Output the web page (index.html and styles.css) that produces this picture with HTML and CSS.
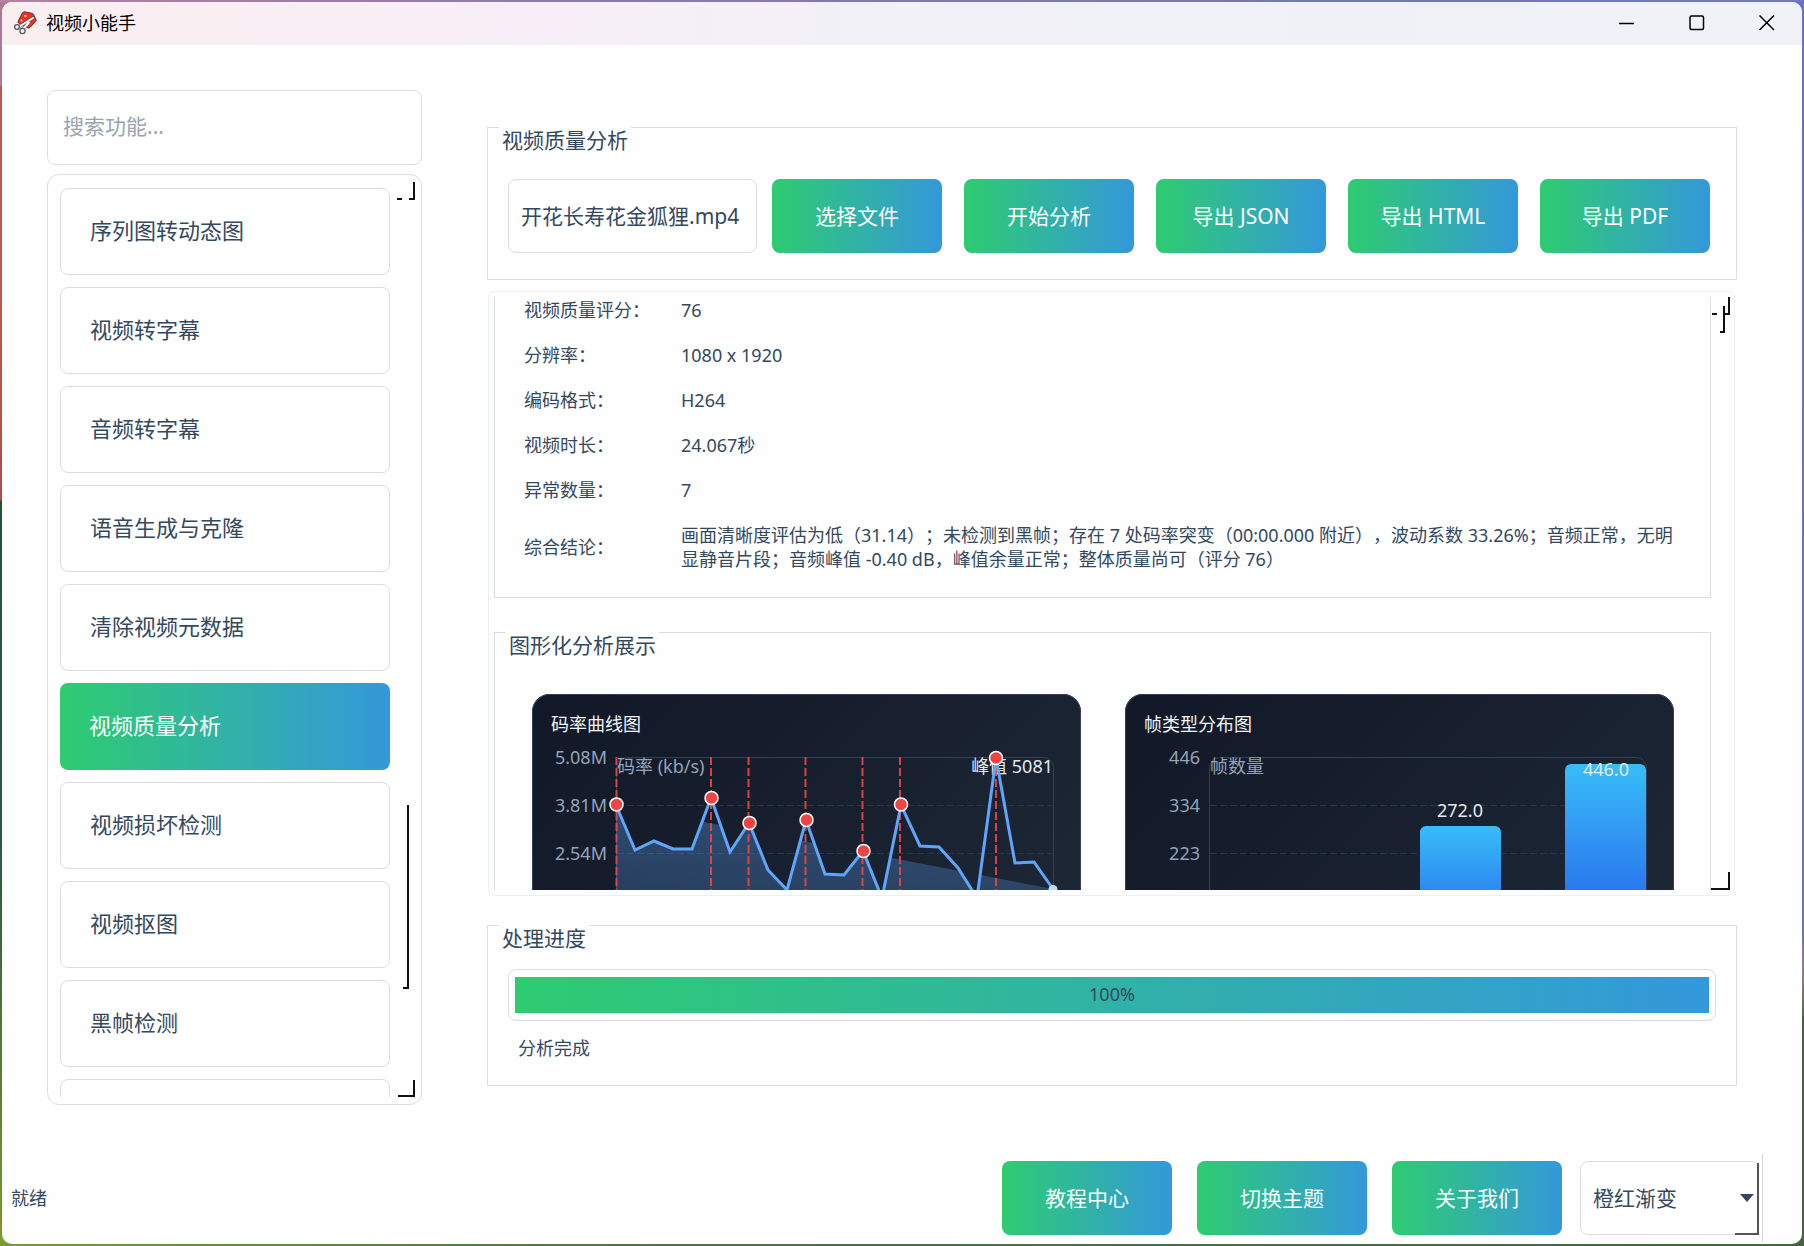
FILE: index.html
```
<!doctype html>
<html lang="zh-CN">
<head>
	<meta charset="UTF-8">
	<title>视频小能手</title>
	<link rel="stylesheet" href="styles.css">
</head>
<body>
	<div class="window">
		<header class="titlebar">
			<svg class="logo" width="24" height="24" viewBox="0 0 24 24">
				<path d="M11.500 .8 19 2.300Q20 2.600 20.500 3.500L23 8.500Q23.500 9.500 22.700 10.400L17 16.500Q16 17.500 14.800 16.800L6 12.500Q4.500 11.500 5.200 10L9.500 1.800Q10.200 .6 11.500 .8Z" fill="#e53429" stroke="#6a302c"/>
				<circle cx="12.500" cy="5" r="1" fill="#fff"/>
				<circle cx="8.500" cy="9.500" r=".9" fill="#fff"/>
				<path d="M20 7 5.500 16M16 11.500 10 18" stroke="#555" stroke-width="3" stroke-linecap="round"/>
				<path d="M20 7 5.500 16M16 11.500 10 18" stroke="#fff" stroke-width="2" stroke-linecap="round"/>
				<circle cx="4" cy="16" r="2.400" fill="#eee" stroke="#555" stroke-width="1.200"/>
				<circle cx="9.500" cy="20" r="2.600" fill="#eee" stroke="#555" stroke-width="1.200"/>
			</svg>
			<h1 class="app-name">视频小能手</h1>
			<button class="win-btn" aria-label="最小化"><svg width="16" height="16" viewBox="0 0 16 16"><path d="M0 8.500H15"/></svg></button>
			<button class="win-btn" aria-label="最大化"><svg width="16" height="16" viewBox="0 0 16 16"><rect x="1" y="1" width="13.500" height="13.500" rx="1.500"/></svg></button>
			<button class="win-btn" aria-label="关闭"><svg width="16" height="16" viewBox="0 0 16 16"><path d="M.5 .5 15 15M15 .5 .5 15"/></svg></button>
		</header>

		<div class="content">
			<aside class="sidebar">
				<input class="search" type="text" placeholder="搜索功能..." aria-label="搜索功能">
				<div class="list">
					<nav class="menu">
						<button class="item">序列图转动态图</button>
						<button class="item">视频转字幕</button>
						<button class="item">音频转字幕</button>
						<button class="item">语音生成与克隆</button>
						<button class="item">清除视频元数据</button>
						<button class="item active">视频质量分析</button>
						<button class="item">视频损坏检测</button>
						<button class="item">视频抠图</button>
						<button class="item">黑帧检测</button>
						<button class="item" aria-label="更多"></button>
					</nav>
					<!-- 滚动条 -->
					<span class="mark side-dash"></span>
					<span class="mark side-up"></span>
					<span class="mark side-thumb"></span>
					<span class="mark side-down"></span>
				</div>
			</aside>

			<main class="main">
				<section class="group">
					<h2 class="legend">视频质量分析</h2>
					<div class="toolbar">
						<input class="file" type="text" value="开花长寿花金狐狸.mp4" aria-label="视频文件">
						<div class="actions">
							<button class="btn">选择文件</button>
							<button class="btn">开始分析</button>
							<button class="btn">导出 JSON</button>
							<button class="btn">导出 HTML</button>
							<button class="btn">导出 PDF</button>
						</div>
					</div>
				</section>

				<div class="scroll">
					<div class="view">
						<section class="group report">
							<dl class="rows">
								<dt>视频质量评分：</dt><dd>76</dd>
								<dt>分辨率：</dt><dd>1080 x 1920</dd>
								<dt>编码格式：</dt><dd>H264</dd>
								<dt>视频时长：</dt><dd>24.067秒</dd>
								<dt>异常数量：</dt><dd>7</dd>
								<dt>综合结论：</dt><dd>画面清晰度评估为低（31.14）；未检测到黑帧；存在 7 处码率突变（00:00.000 附近），波动系数 33.26%；音频正常，无明显静音片段；音频峰值 -0.40 dB，峰值余量正常；整体质量尚可（评分 76）</dd>
							</dl>
						</section>

						<section class="group charts">
							<h2 class="legend">图形化分析展示</h2>
							<div class="cards">
								<div class="card">
									<svg class="chart" viewBox="0 0 549 320">
										<defs>
											<linearGradient id="area" x1="0" y1="64" x2="0" y2="256" gradientUnits="userSpaceOnUse">
												<stop offset="0" stop-color="#60a5fa" stop-opacity=".4"/>
												<stop offset="1" stop-color="#60a5fa" stop-opacity=".18"/>
											</linearGradient>
											<clipPath id="under"><path d="M84 111 521 195V256H84Z"/></clipPath>
										</defs>
										<text class="t-title" x="19" y="37">码率曲线图</text>
										<rect class="frame" x="84.500" y="63.500" width="437" height="192" rx="10"/>
										<path class="grid" d="M85 111.500H521M85 159.500H521M85 207.500H521"/>
										<g class="t-axis">
											<text x="75" y="70">5.08M</text>
											<text x="75" y="118">3.81M</text>
											<text x="75" y="166">2.54M</text>
										</g>
										<path clip-path="url(#under)" fill="url(#area)" d="M84 111 103 156 122 147 141 155H160L179 104 198 158 217 129 236 176 255 196 274 126 293 180 312 181 331 157 350 204 369 111 388 152 407 153 426 174 445 204 464 64 483 169 502 168 521 195V256H84Z"/>
										<text class="t-unit" x="85" y="79">码率 (kb/s)</text>
										<text class="t-peak" x="521" y="79">峰值 5081</text>
										<path class="alarm" d="M84.500 63V256M179 63V256M216.500 63V256M273.500 63V256M330.500 63V256M368 63V256M464 63V256"/>
										<path class="line" d="M84 111 103 156 122 147 141 155H160L179 104 198 158 217 129 236 176 255 196 274 126 293 180 312 181 331 157 350 204 369 111 388 152 407 153 426 174 445 204 464 64 483 169 502 168 521 195"/>
										<g class="dots">
											<circle cx="84.500" cy="110.500" r="6.500"/>
											<circle cx="179.500" cy="104" r="6.500"/>
											<circle cx="217.500" cy="129" r="6.500"/>
											<circle cx="274.500" cy="126" r="6.500"/>
											<circle cx="331.500" cy="157" r="6.500"/>
											<circle cx="369" cy="110.500" r="6.500"/>
											<circle cx="464" cy="64" r="6.500"/>
										</g>
										<circle cx="521" cy="195.500" r="4.500" fill="#bfdbfe"/>
									</svg>
								</div>
								<div class="card">
									<svg class="chart" viewBox="0 0 549 320">
										<defs>
											<linearGradient id="bar" x1="0" y1="0" x2="0" y2="1">
												<stop offset="0" stop-color="#38bdf8"/>
												<stop offset=".9" stop-color="#2563eb"/>
											</linearGradient>
										</defs>
										<text class="t-title" x="19" y="37">帧类型分布图</text>
										<rect class="frame" x="84.500" y="63.500" width="437" height="192" rx="10"/>
										<path class="grid" d="M85 111.500H521M85 159.500H521M85 207.500H521"/>
										<g class="t-axis">
											<text x="75" y="70">446</text>
											<text x="75" y="118">334</text>
											<text x="75" y="166">223</text>
										</g>
										<text class="t-unit" x="85" y="79">帧数量</text>
										<rect x="295" y="132" width="81" height="124" rx="6" fill="url(#bar)"/>
										<rect x="440" y="70" width="81" height="186" rx="6" fill="url(#bar)"/>
										<text class="t-value" x="335" y="123">272.0</text>
										<text class="t-value" x="481" y="82">446.0</text>
									</svg>
								</div>
							</div>
						</section>
					</div>
					<span class="mark main-dash"></span>
					<span class="mark main-up"></span>
					<span class="mark main-thumb"></span>
					<span class="mark main-down"></span>
				</div>

				<section class="group">
					<h2 class="legend">处理进度</h2>
					<div class="progress" role="progressbar" aria-label="处理进度" aria-valuenow="100" aria-valuemin="0" aria-valuemax="100">
						<div class="fill">100%</div>
					</div>
					<p class="state">分析完成</p>
				</section>
			</main>
		</div>

		<footer class="statusbar">
			<span class="status">就绪</span>
			<div class="tools">
				<button class="btn">教程中心</button>
				<button class="btn">切换主题</button>
				<button class="btn">关于我们</button>
			</div>
			<div class="theme">
				<select class="select" aria-label="主题">
					<option>橙红渐变</option>
				</select>
				<svg class="arrow" width="14" height="8" viewBox="0 0 14 8"><path d="M0 0H14L7 8Z" fill="#34495e"/></svg>
				<span class="mark theme-side"></span>
			</div>
		</footer>
	</div>
</body>
</html>
```
FILE: styles.css
```
*{
	box-sizing: border-box;
}
body{
	margin: 0;
	height: 100vh;
	padding: 2px;
	overflow: hidden;
	font-family: "Noto Sans", "Noto Sans CJK SC", sans-serif;
	font-size: 18px;
	line-height: 24px;
	text-spacing-trim: space-all;
	color: #34495e;
	background:
		linear-gradient(90deg, #b5829f, #8d7aa8 30%, #7a79b0 60%, #6f77bd) top / 100% 2px no-repeat,
		linear-gradient(90deg, #7d9a2e, #4d7a3f 30%, #44663f) bottom / 100% 2px no-repeat,
		linear-gradient(#ac7b92 0 86px, #b85a50 86px 300px, #a8504a 500px, #24503c 501px, #2e5e40 70%, #7d9a2e) left / 50% 100% no-repeat,
		linear-gradient(#6a72bd, #6f74b0 75%, #a07a90 78%, #44663f 82%) right / 50% 100% no-repeat;
}
button, input, select{
	font: inherit;
	color: inherit;
}
.window{
	height: 100%;
	display: flex;
	flex-direction: column;
	border-radius: 10px;
	background: #fefefe;
	overflow: hidden;
}

/* 标题栏 */
.titlebar{
	display: flex;
	align-items: center;
	height: 43px;
	padding: 0 0 2px 11px;
	background: linear-gradient(90deg, #f9eff0, #f9eef4 20%, #f8eef7 28%, #f1f1f7 50%, #f0f2f7);
	color: #000;
}
.app-name{
	flex: 1;
	margin: 0 0 0 9px;
	font-size: 18px;
	font-weight: normal;
}
.win-btn{
	width: 70px;
	height: 41px;
	padding: 0;
	border: 0;
	background: none;
}
.win-btn svg{
	display: block;
	margin: 0 auto;
	fill: none;
	stroke: #000;
	stroke-width: 1.5;
}

.content{
	flex: 1;
	min-height: 0;
	display: flex;
	gap: 65px;
	padding: 0 65px 0 45px;
}

/* 左侧功能列表 */
.sidebar{
	width: 375px;
	display: flex;
	flex-direction: column;
	gap: 9px;
	padding: 45px 0 49px;
}
.search, .file, .select{
	height: 75px;
	border: 1px solid #dadde4;
	border-radius: 8px;
	background: #fff;
	font-size: 21px;
}
.search{
	width: 100%;
	padding: 0 15px 3px;
}
.search::placeholder{
	color: #9aa3b0;
}
.list{
	position: relative;
	flex: 1;
	min-height: 0;
	padding: 7px 31px 7px 12px;
	border: 1px solid #dadde4;
	border-radius: 12px;
}
.menu{
	height: 100%;
	padding-top: 6px;
	display: flex;
	flex-direction: column;
	gap: 12px;
	overflow: hidden;
}
.item{
	flex: none;
	height: 87px;
	padding: 0 29px 4px;
	border: 1px solid #dadde4;
	border-radius: 8px;
	background: #fff;
	font-size: 22px;
	text-align: left;
}
.active{
	border: 0;
	color: #fff;
	background: linear-gradient(90deg, #2ecc71, #3498db);
}

/* 右侧主区 */
.main{
	flex: 1;
	min-width: 0;
	display: flex;
	flex-direction: column;
	padding: 82px 0 68px;
}
.group{
	border: 1px solid #dadde4;
}
.legend{
	width: fit-content;
	margin: -1px 0 0 11px;
	padding: 0 3px;
	background: #fefefe;
	font-size: 21px;
	font-weight: normal;
	line-height: 26px;
}
.toolbar{
	display: flex;
	gap: 15px;
	padding: 26px 26px 26px 20px;
}
.file{
	width: 249px;
	height: 74px;
	padding: 0 12px 3px;
}
.actions{
	flex: 1;
	display: flex;
	gap: 22px;
}
.btn{
	flex: 1;
	height: 74px;
	padding: 0;
	border: 0;
	border-radius: 8px;
	background: linear-gradient(90deg, #2ecc71, #3498db);
	color: #fff;
	font-size: 21px;
}
.scroll{
	position: relative;
	flex: 1;
	min-height: 0;
	margin: 11px 2px 29px 1px;
	padding: 5px 23px 5px 5px;
	border: 1px solid #eeeff1;
	border-radius: 8px;
}
.view{
	height: 100%;
	overflow: hidden;
}
.report{
	border-top: 0;
}
.rows{
	display: grid;
	grid-template-columns: 157px 1fr;
	row-gap: 21px;
	align-items: center;
	margin: 0;
	padding: 1px 28px 26px 29px;
}
.rows dd{
	margin: 0;
}
.charts{
	margin-top: 34px;
}
.cards{
	display: grid;
	grid-template-columns: 1fr 1fr;
	gap: 44px;
	padding: 36px 36px 36px 37px;
}
.card{
	border-radius: 18px;
	box-shadow: inset 0 0 0 1px #334155;
	background: linear-gradient(135deg, #111827, #1f2937);
}

/* 图表 */
.chart{
	display: block;
	width: 100%;
	font-size: 18px;
}
.frame{
	fill: none;
	stroke: #334155;
}
.grid{
	stroke: #273549;
	stroke-dasharray: 7 3;
}
.t-title{
	fill: #f1f5f9;
}
.t-axis, .t-unit{
	fill: #94a3b8;
}
.t-axis, .t-peak{
	text-anchor: end;
}
.t-peak, .t-value{
	fill: #e2e8f0;
}
.t-value{
	text-anchor: middle;
}
.alarm{
	stroke: #ef4444;
	stroke-width: 2;
	stroke-dasharray: 8 3;
	opacity: .9;
}
.line{
	fill: none;
	stroke: #60a5fa;
	stroke-width: 3;
}
.dots{
	fill: #ef4444;
	stroke: #fff;
	stroke-width: 1.5;
}

/* 进度 */
.progress{
	margin: 18px 20px 0 20px;
	padding: 7px 6px;
	border: 1px solid #dadde4;
	border-radius: 8px;
}
.fill{
	height: 36px;
	line-height: 34px;
	text-align: center;
	background: linear-gradient(90deg, #2ecc71, #3498db);
}
.state{
	margin: 15px 30px 25px;
}

/* 底部状态栏 */
.statusbar{
	display: flex;
	align-items: center;
	height: 90px;
	padding: 0 39px 2px 9px;
}
.status{
	flex: 1;
}
.tools{
	display: flex;
	gap: 25px;
	margin-right: 18px;
}
.tools .btn{
	flex: none;
	width: 170px;
}
.theme{
	position: relative;
	display: flex;
	align-items: center;
	height: 88px;
	padding-right: 3px;
	border-right: 1px solid #d5d7da;
}
.select{
	width: 179px;
	height: 74px;
	padding: 0 12px;
	appearance: none;
}
.arrow{
	position: absolute;
	right: 8px;
}

/* 滚动条和下拉框的残边 */
.mark{
	position: absolute;
	border: solid #111;
	border-width: 0 2px 2px 0;
}
.side-dash{
	top: 23px;
	right: 19px;
	width: 5px;
}
.side-up{
	top: 7px;
	right: 6px;
	width: 6px;
	height: 18px;
}
.side-thumb{
	bottom: 115px;
	right: 12px;
	width: 6px;
	height: 184px;
}
.side-down{
	bottom: 7px;
	right: 6px;
	width: 17px;
	height: 17px;
}
.main-dash{
	top: 21px;
	right: 17px;
	width: 5px;
}
.main-up{
	top: 5px;
	right: 4px;
	width: 6px;
	height: 18px;
}
.main-thumb{
	top: 14px;
	right: 9px;
	width: 5px;
	height: 27px;
}
.main-down{
	bottom: 5px;
	right: 4px;
	width: 19px;
	height: 18px;
}
.theme-side{
	right: 3px;
	bottom: 7px;
	width: 24px;
	height: 72px;
	border-color: #555;
	border-width: 0 2px 0 0;
	background: linear-gradient(#555, #555) bottom / 100% 2px no-repeat;
}
```
